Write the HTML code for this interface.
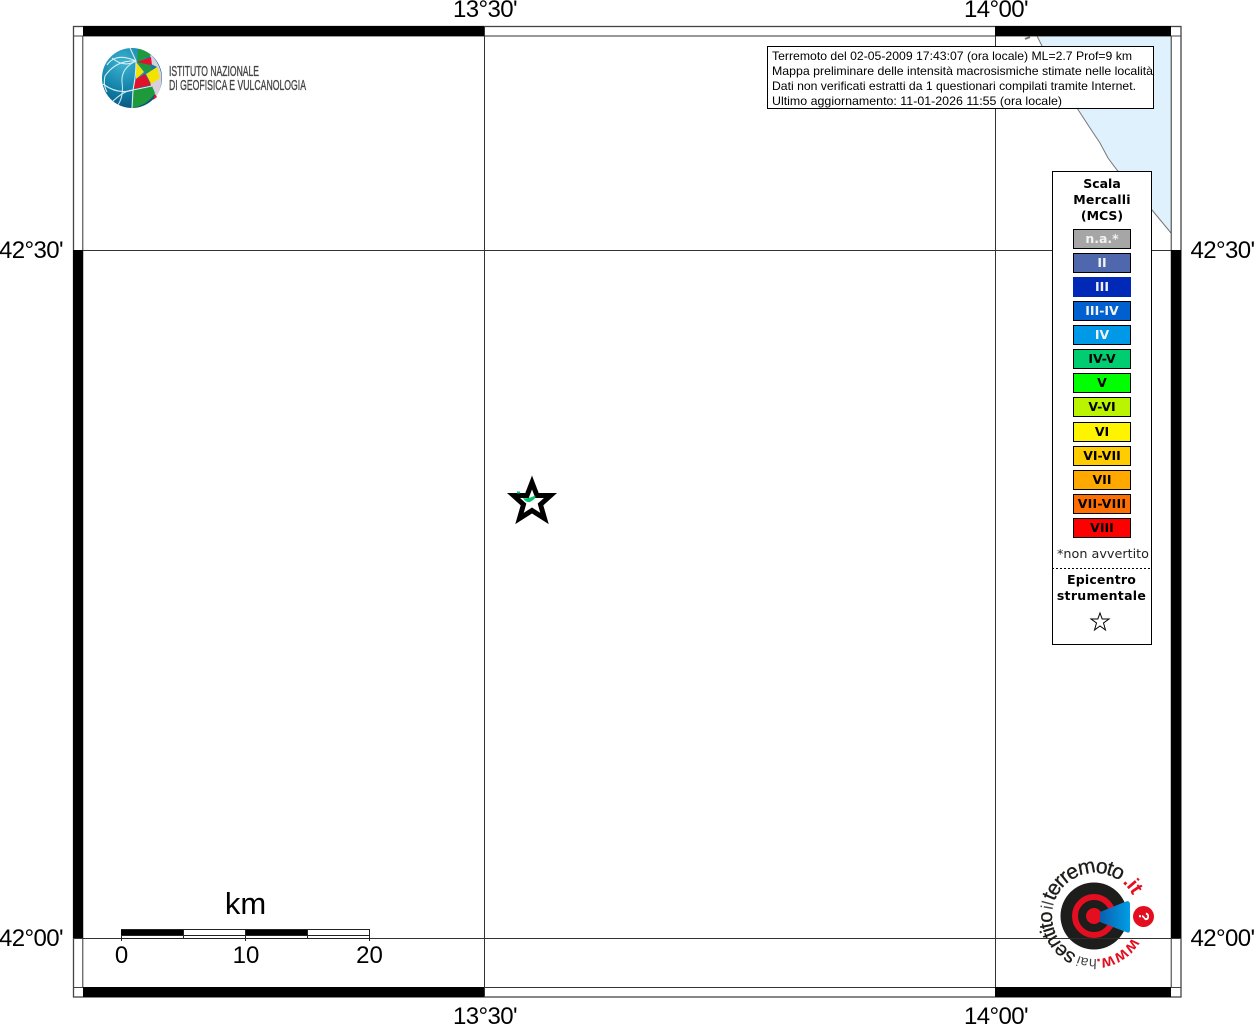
<!DOCTYPE html>
<html><head><meta charset="utf-8"><title>Mappa</title>
<style>html,body{margin:0;padding:0;background:#fff}svg{display:block}
.a{font-family:"Liberation Sans",Arial,sans-serif}
.d{font-family:"DejaVu Sans",sans-serif}
</style></head><body>
<svg xmlns="http://www.w3.org/2000/svg" width="1254" height="1024" viewBox="0 0 1254 1024">
<defs>
<radialGradient id="gb" cx="35%" cy="25%" r="85%"><stop offset="0" stop-color="#3fb4d0"/><stop offset=".55" stop-color="#0f7fa8"/><stop offset="1" stop-color="#0b4a70"/></radialGradient>
<linearGradient id="cone" x1="0" y1="0" x2="1" y2="0"><stop offset="0" stop-color="#0a5fae"/><stop offset="1" stop-color="#009fe6"/></linearGradient>
<path id="circ" d="M1132.200 937.500 A43 43 0 1 1 1135.400 901.300"/>
</defs>
<rect width="1254" height="1024" fill="#fff"/>
<!-- sea -->
<path d="M1037 36 L1043 48 L1060 80 L1077 108 L1090 128 L1100 143 L1108 158 L1117 170 L1152 210 L1171 233 L1171 36Z" fill="#dff1fd"/>
<path d="M1037 36 L1043 48 L1060 80 L1077 108 L1090 128 L1100 143 L1108 158 L1117 170 L1152 210 L1171 233" fill="none" stroke="#777" stroke-width="1"/>
<path d="M1030 37 L1025 39" stroke="#777" stroke-width="2" fill="none"/>
<!-- grid -->
<path d="M484.500 26V997M995.500 26V997M73 250.500H1181M73 938.500H1181" stroke="#333" stroke-width="1" fill="none"/>
<!-- frame -->
<rect x="73.500" y="26.500" width="1107.500" height="970.500" fill="none" stroke="#444" stroke-width="1.300"/>
<rect x="82.800" y="36" width="1088.400" height="951.500" fill="none" stroke="#333"/>
<path d="M73.500 36H83M1171 36H1181M73.500 987.500H83M1171 987.500H1181" stroke="#444"/>
<rect x="83" y="26" width="401" height="10" fill="#000"/>
<rect x="995" y="26" width="176" height="10" fill="#000"/>
<rect x="83" y="987" width="401" height="10" fill="#000"/>
<rect x="995" y="987" width="176" height="10" fill="#000"/>
<rect x="73" y="250" width="10" height="688" fill="#000"/>
<rect x="1171" y="250" width="10" height="688" fill="#000"/>
<!-- axis labels -->
<g class="a" font-size="24" fill="#000" letter-spacing="-.6">
<text x="453" y="17">13°30'</text><text x="964" y="17">14°00'</text>
<text x="453" y="1024">13°30'</text><text x="964" y="1024">14°00'</text>
<text x="-1" y="258">42°30'</text><text x="1190.500" y="258">42°30'</text>
<text x="-1" y="946">42°00'</text><text x="1190.500" y="946">42°00'</text>
</g>
<!-- INGV logo -->
<circle cx="132" cy="78" r="30" fill="url(#gb)"/>
<path d="M150 54 Q160 63 161.500 76 Q162 88 156 97 L150 84 L158 77 L157 67 L151 64Z" fill="#d9d0dc"/>
<path d="M137 62 L138 49 Q145 50 151 55Z" fill="#1f9a3a"/>
<path d="M137 62 L151 57 L152 65 L143 64Z" fill="#e2122d"/>
<path d="M137 62 L150 65 L152 72 L144 71Z" fill="#1f9a3a"/>
<path d="M136 62 L144 72 L136 79Z" fill="#f4e300"/>
<path d="M146 74 L157 67 L160 78 L151 84Z" fill="#f4e300"/>
<path d="M136 79 L145 74 L151 85 L133 89Z" fill="#e2122d"/>
<path d="M133 90 L152 86 L155 93 Q148 105 132 108Z" fill="#1f9a3a"/>
<path d="M155 94 L157 97 L153 100Z" fill="#e2122d"/>
<g fill="none" stroke="#d8eef5" stroke-width="1.100">
<path d="M136 61 L130 48"/>
<path d="M136 61 Q121 68 122 82 Q124 96 118 105" stroke-opacity=".9"/>
<path d="M136 61 Q136 76 133 90 L132 108"/>
<path d="M136 61 Q116 60 105 76 Q103 85 107 92"/>
<path d="M112 58 Q124 68 136 61"/>
<path d="M103 84 Q118 95 133 90 L152 86"/>
<path d="M107 65 Q116 52 136 61"/>
<path d="M113 101 Q125 90 133 90"/>
</g>
<g class="a" fill="#444" stroke="#444" stroke-width=".35" font-size="15">
<text x="169" y="76" textLength="90" lengthAdjust="spacingAndGlyphs">ISTITUTO NAZIONALE</text>
<text x="169" y="90" textLength="137" lengthAdjust="spacingAndGlyphs">DI GEOFISICA E VULCANOLOGIA</text>
</g>
<!-- info box -->
<rect x="767.500" y="46.500" width="386" height="62" fill="#fff" stroke="#000"/>
<g class="a" font-size="12" fill="#000">
<text x="772" y="60" textLength="360" lengthAdjust="spacingAndGlyphs">Terremoto del 02-05-2009 17:43:07 (ora locale) ML=2.7 Prof=9 km</text>
<text x="772" y="75" textLength="381" lengthAdjust="spacingAndGlyphs">Mappa preliminare delle intensità macrosismiche stimate nelle località</text>
<text x="772" y="90" textLength="364" lengthAdjust="spacingAndGlyphs">Dati non verificati estratti da 1 questionari compilati tramite Internet.</text>
<text x="772" y="105" textLength="290" lengthAdjust="spacingAndGlyphs">Ultimo aggiornamento: 11-01-2026 11:55 (ora locale)</text>
</g>
<!-- legend -->
<rect x="1052.500" y="171.500" width="99" height="473" fill="#fff" stroke="#000"/>
<g class="d" font-size="12.500" font-weight="bold" text-anchor="middle" fill="#000">
<text x="1102" y="188">Scala</text><text x="1102" y="204" letter-spacing=".2">Mercalli</text><text x="1102" y="220">(MCS)</text>
</g>
<g stroke="#000" stroke-width="1">
<rect x="1073.500" y="229.500" width="57" height="19" fill="#a6a6a6"/>
<rect x="1073.500" y="253.500" width="57" height="19" fill="#4e67ad"/>
<rect x="1073" y="277" width="58" height="20" fill="#0029b8" stroke="none"/>
<rect x="1073.500" y="301.500" width="57" height="19" fill="#0060d0"/>
<rect x="1073.500" y="325.500" width="57" height="19" fill="#0099e8"/>
<rect x="1073.500" y="349.500" width="57" height="19" fill="#00cc70"/>
<rect x="1073.500" y="373.500" width="57" height="19" fill="#00ff00"/>
<rect x="1073.500" y="397.500" width="57" height="19" fill="#bbf400"/>
<rect x="1073.500" y="422.500" width="57" height="19" fill="#fff400"/>
<rect x="1073.500" y="446.500" width="57" height="19" fill="#ffcc00"/>
<rect x="1073.500" y="470.500" width="57" height="19" fill="#ffa800"/>
<rect x="1073.500" y="494.500" width="57" height="19" fill="#ff6e00"/>
<rect x="1073.500" y="518.500" width="57" height="19" fill="#ff0000"/>
</g>
<g class="d" font-size="12.500" font-weight="bold" text-anchor="middle">
<g fill="#f2f2f2">
<text x="1102" y="243">n.a.*</text><text x="1102" y="267">II</text><text x="1102" y="291">III</text><text x="1102" y="315">III-IV</text><text x="1102" y="339">IV</text>
</g>
<g fill="#000">
<text x="1102" y="363">IV-V</text><text x="1102" y="387">V</text><text x="1102" y="411">V-VI</text><text x="1102" y="436">VI</text><text x="1102" y="460">VI-VII</text><text x="1102" y="484">VII</text><text x="1102" y="508" letter-spacing=".2">VII-VIII</text><text x="1102" y="532">VIII</text>
<text x="1101.500" y="584" letter-spacing=".2">Epicentro</text><text x="1101.500" y="600" letter-spacing=".3">strumentale</text>
</g>
</g>
<text class="d" x="1103" y="558" font-size="12.500" text-anchor="middle" fill="#222" textLength="92" lengthAdjust="spacingAndGlyphs">*non avvertito</text>
<path d="M1052 568.500H1150" stroke="#000" stroke-dasharray="2 2"/>
<path d="M1100 613 L1102.200 619 L1109 619 L1103.500 623 L1105.500 630 L1100 626 L1094.500 630 L1096.500 623 L1091 619 L1097.800 619Z" fill="#fff" stroke="#000" stroke-width="1"/>
<!-- epicentre star -->
<path d="M532 482.500 L537 495.500 L550.500 495.500 L540.500 504.500 L544.500 518.500 L532 510.500 L519.500 518.500 L523.500 504.500 L513.500 495.500 L527 495.500Z" fill="#fff" stroke="#000" stroke-width="5" stroke-miterlimit="6"/>
<path d="M523 498 Q529 499 535 495.500 Q537 498 530 502 Q526 503 523 498Z" fill="#00c46c"/>
<path d="M517 491.500h3v2h-3z" fill="#00c46c"/>
<!-- scale -->
<rect x="121.500" y="929.500" width="248" height="9" fill="#fff" stroke="#222"/>
<rect x="121" y="930" width="63" height="5.500" fill="#000"/>
<rect x="245" y="930" width="63" height="5.500" fill="#000"/>
<path d="M121 935.500H370M183.500 930V938M245.500 930V938M307.500 930V938" stroke="#222" fill="none"/>
<path d="M121.500 938V941M245.500 938V941M369.500 938V941" stroke="#222"/>
<g class="a" fill="#000" text-anchor="middle">
<text x="245.500" y="914" font-size="31">km</text>
<g font-size="24"><text x="121.500" y="963">0</text><text x="246" y="963">10</text><text x="369.500" y="963">20</text></g>
</g>
<!-- terremoto logo -->
<circle cx="1094" cy="916" r="33.500" fill="#1d1d1b"/>
<circle cx="1094" cy="916" r="19" fill="none" stroke="#e30f20" stroke-width="6"/>
<circle cx="1094" cy="916" r="8" fill="#e30f20"/>
<path d="M1100 912 L1126 901.500 Q1130 900 1130 905 L1130 930 Q1130 934 1126 932 L1100 922Z" fill="url(#cone)"/>
<circle cx="1143.500" cy="916.500" r="10.500" fill="#e30f20"/>
<text class="a" x="1143.500" y="921" font-size="15" font-weight="bold" fill="#fff" text-anchor="middle" transform="rotate(90 1143.500 916.500)">?</text>
<path d="M1030 938.500H1171" stroke="#333" stroke-opacity=".8"/>
<g class="a" font-size="20" fill="#1d1d1b">
<text font-weight="bold" fill="#e30f20" font-size="17"><textPath href="#circ" startOffset="0">www.</textPath></text>
<text fill="#444" font-size="14"><textPath href="#circ" startOffset="43">hai</textPath></text>
<text stroke="#1d1d1b" stroke-width=".3"><textPath href="#circ" startOffset="64" letter-spacing="-1">sentito</textPath></text>
<text fill="#444" font-size="17"><textPath href="#circ" startOffset="118">il</textPath></text>
<text stroke="#1d1d1b" stroke-width=".3" font-size="21"><textPath href="#circ" startOffset="127" letter-spacing="-1.300">terremoto</textPath></text>
<text font-weight="bold" fill="#e30f20" font-size="20"><textPath href="#circ" startOffset="209" letter-spacing="-.5">.it</textPath></text>
</g>
</svg>
</body></html>
